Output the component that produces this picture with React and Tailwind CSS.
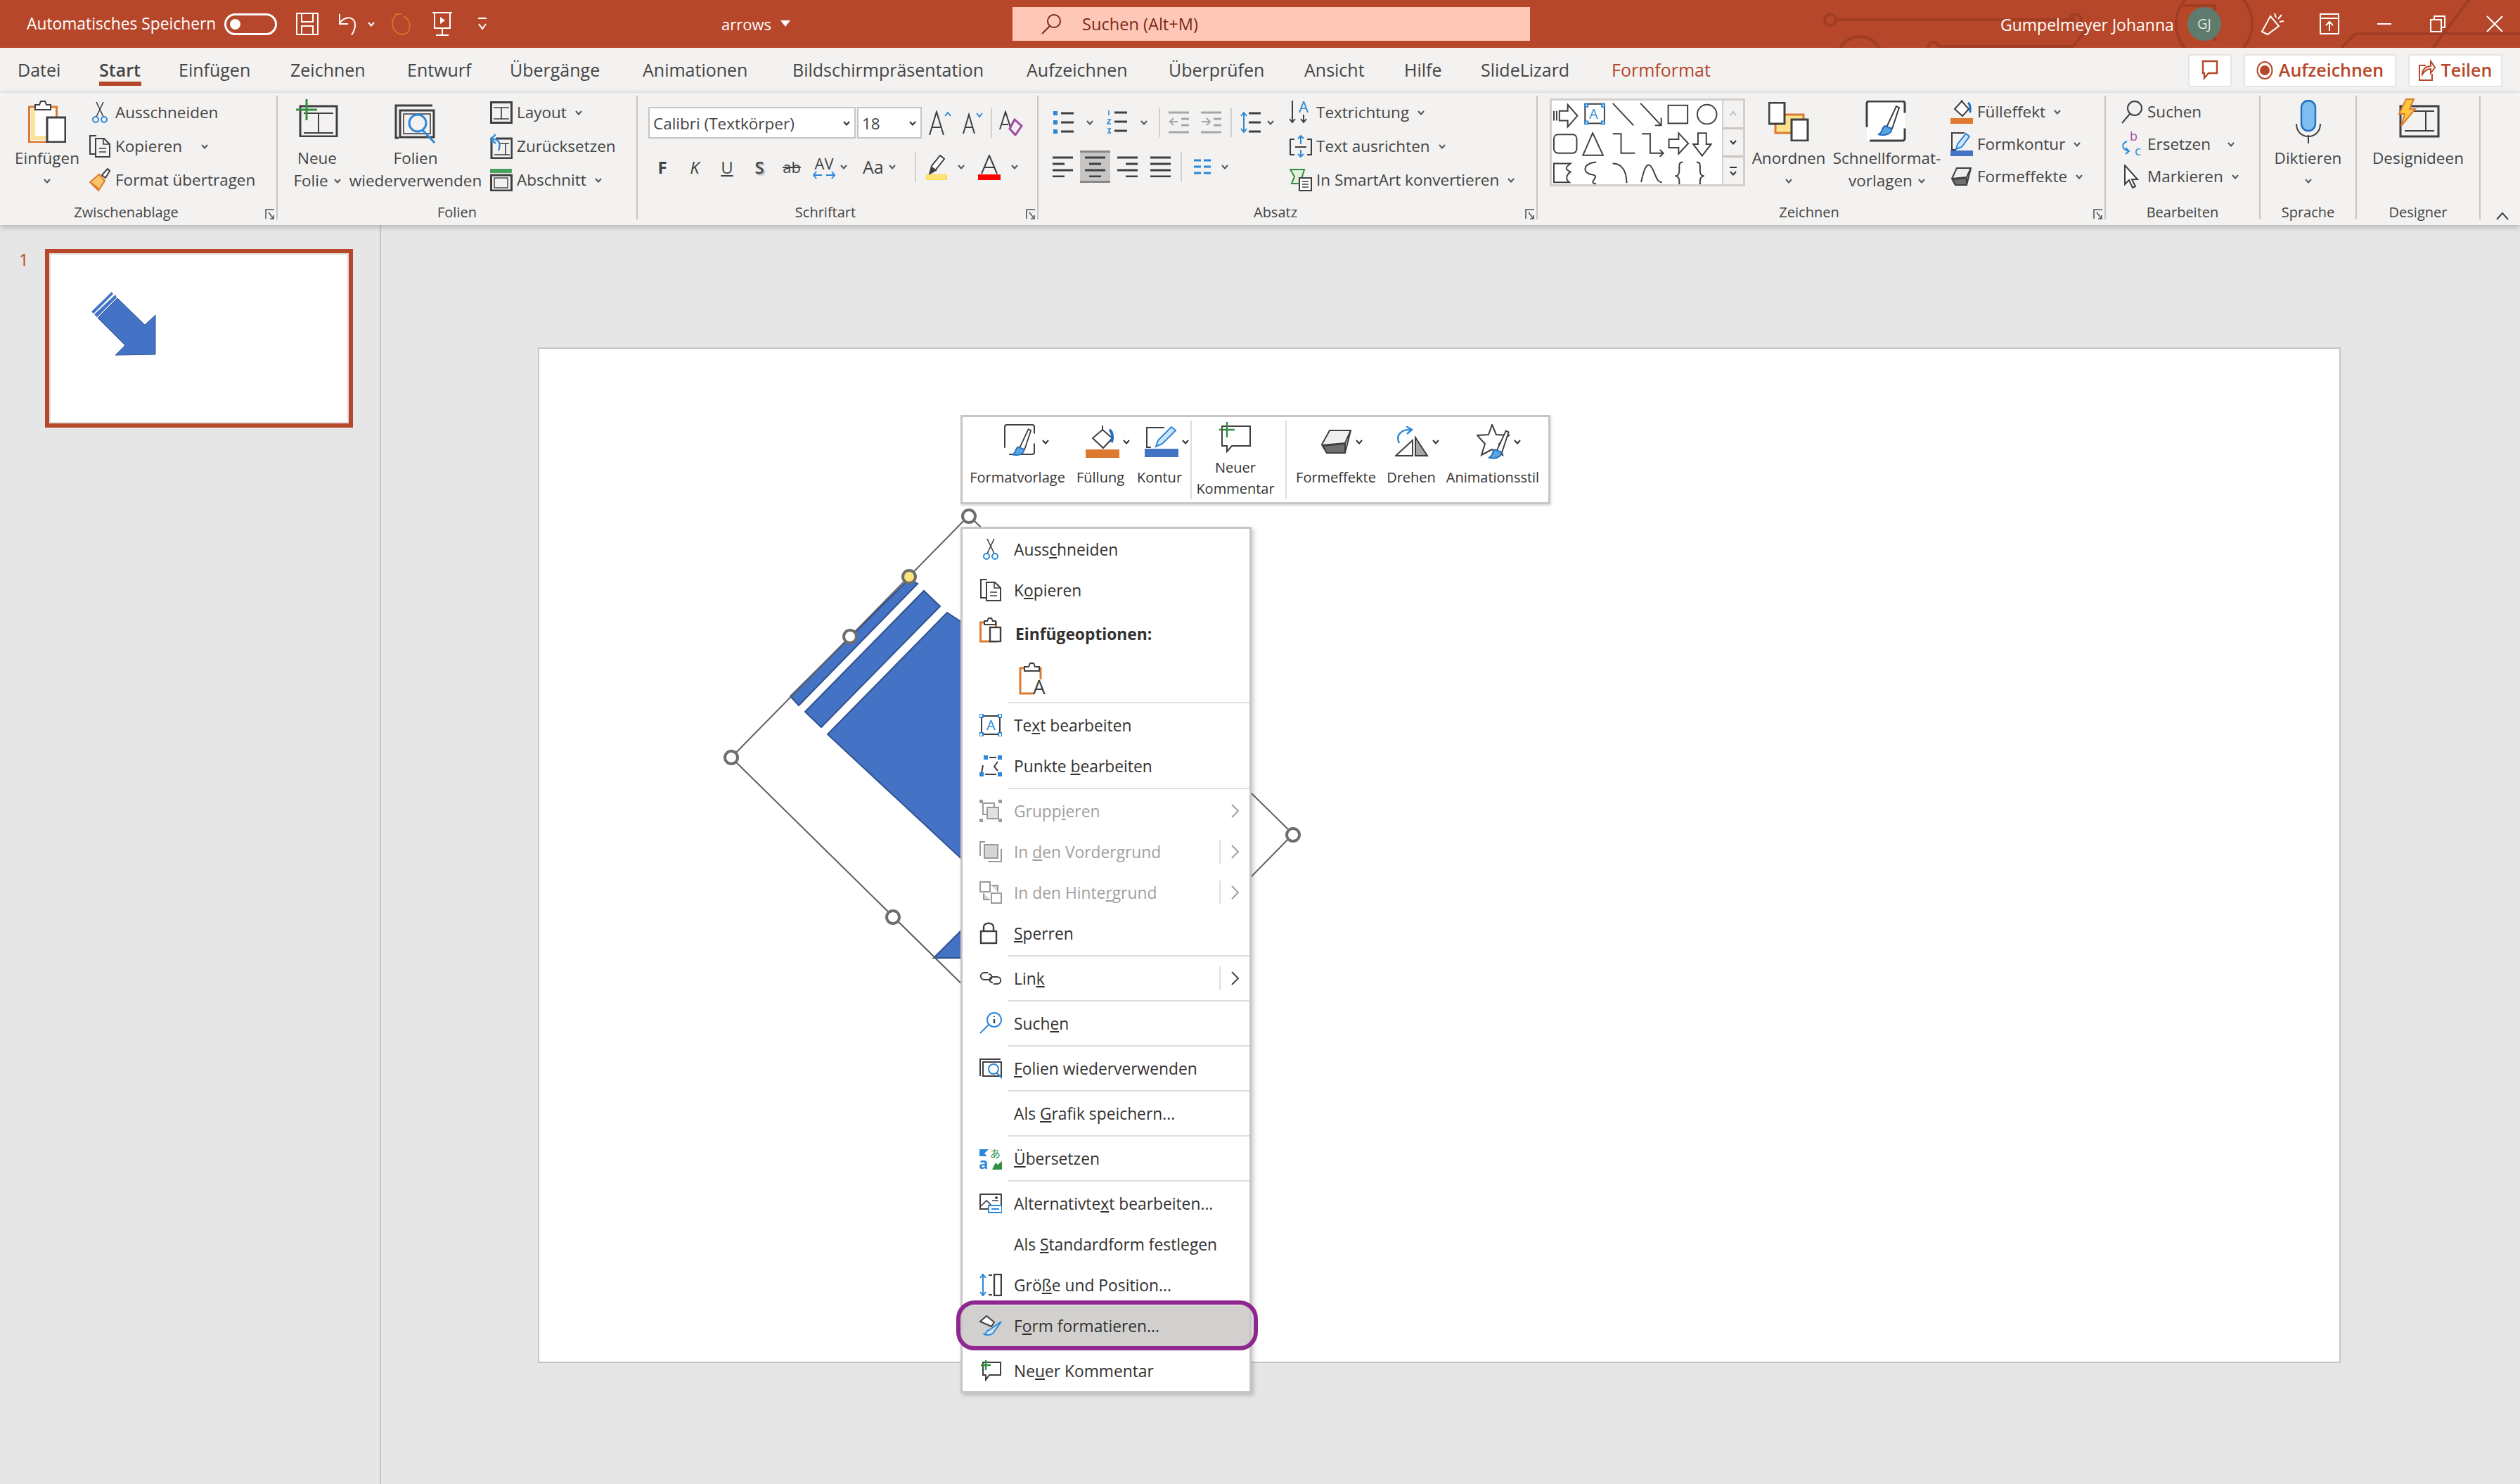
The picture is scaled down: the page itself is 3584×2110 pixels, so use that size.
import React from 'react';

const DK = '#3f3f41';
const BL = '#2b88d8';
const OR = '#dd7a30';
const GR = '#2f8f3f';
const GY = '#a6a6a6';

const Svg = ({ w, h, children, className = '', stroke = DK, sw = 2 }) => (
    <svg width={w} height={h} viewBox={`0 0 ${w} ${h}`} fill="none" stroke={stroke} strokeWidth={sw} className={`shrink-0 ${className}`}>
        {children}
    </svg>
);

const Chev = ({ className = '', color = '#555' }) => (
    <svg width="10" height="7" viewBox="0 0 10 7" fill="none" stroke={color} strokeWidth="2" className={`shrink-0 ${className}`}>
        <path d="M1 1l4 4.5L9 1" />
    </svg>
);

// --- shared icons ---
const Scissors = () => (
    <Svg w={32} h={32}>
        <path d="M11 1l10 21M21 1L11 22" strokeWidth="1.6" />
        <circle cx="10" cy="26" r="4" stroke={BL} />
        <circle cx="22" cy="26" r="4" stroke={BL} />
    </Svg>
);
const CopyIcon = () => (
    <Svg w={32} h={32}>
        <path d="M11 1H2v26h8" />
        <path d="M10 5h12l8 8v18H10z" />
        <path d="M21 5v8h9M15 19h10M15 24h10" strokeWidth="1.6" />
    </Svg>
);
const Painter = () => (
    <Svg w={32} h={34}>
        <path d="M2 20l13-11 8 9-9 14z" fill="#f6c56b" stroke={OR} />
        <path d="M4 21l10 8" stroke={OR} />
        <path d="M19 10l8-9 3 3-6 10z" fill="#fff" />
    </Svg>
);
const LayoutIcon = () => (
    <Svg w={32} h={32} sw={3}>
        <rect x="1.5" y="1.5" width="29" height="29" />
        <path d="M5 9h22M16 9v17M5 25h22" strokeWidth="1.6" />
    </Svg>
);
const ResetIcon = () => (
    <Svg w={32} h={36}>
        <rect x="2" y="7" width="29" height="28" strokeWidth="3" />
        <path d="M12 14h15M22 14v17M6 30h22" strokeWidth="1.6" />
        <path d="M8 1L1 8l7 6M2 8c10-1 14 5 10 16" stroke={BL} strokeWidth="2.4" fill="#f3f2f1" />
    </Svg>
);
const SectionIcon = () => (
    <Svg w={32} h={32}>
        <rect x="1" y="0" width="29" height="5" fill="#4aa564" stroke={GR} strokeWidth="1.5" />
        <rect x="1.5" y="9" width="29" height="22" strokeWidth="3" />
        <rect x="6" y="13" width="19" height="14" strokeWidth="1.4" />
    </Svg>
);
const BulletList = () => (
    <Svg w={32} h={32} sw={3}>
        <path d="M12 3h18M12 16h18M12 29h18" />
        <path d="M1 0h6v6H1zM1 13h6v6H1zM1 26h6v6H1z" fill={BL} stroke="none" />
    </Svg>
);
const NumberList = () => (
    <Svg w={32} h={34} sw={3}>
        <path d="M11 3h18M11 16h18M11 29h18" />
        <path d="M3 0v7M1 13h4l-4 6h5M1 26h4l-2 3 2 3H1" stroke={BL} strokeWidth="1.6" />
    </Svg>
);
const Indent = ({ flip }) => (
    <Svg w={30} h={32} sw={3} stroke={GY}>
        <path d="M0 2h29M18 11h11M18 20h11M0 30h29" />
        <path d={flip ? 'M1 15h11M8 10l5 5-5 5' : 'M13 15H2M7 10l-5 5 5 5'} strokeWidth="2" />
    </Svg>
);
const LineSpacing = () => (
    <Svg w={30} h={32} sw={3}>
        <path d="M12 3h17M12 16h17M12 29h17" />
        <path d="M5 30V2M1 7l4-5 4 5M1 25l4 5 4-5" stroke={BL} strokeWidth="2" />
    </Svg>
);
const Align = ({ mode }) => (
    <Svg w={30} h={30} sw={3}>
        {mode === 'l' && <path d="M0 2h29M0 11h17M0 20h29M0 29h17" />}
        {mode === 'c' && <path d="M0 2h29M6 11h17M0 20h29M6 29h17" />}
        {mode === 'r' && <path d="M0 2h29M12 11h17M0 20h29M12 29h17" />}
        {mode === 'j' && <path d="M0 2h29M0 11h29M0 20h29M0 29h29" />}
    </Svg>
);
const ColumnsIcon = () => (
    <Svg w={26} h={24} sw={3} stroke={BL}>
        <path d="M1 3h10M15 3h10M1 12h10M15 12h10M1 21h10M15 21h10" />
    </Svg>
);
const FillBucket = () => (
    <Svg w={30} h={26}>
        <path d="M15 2l10 11-9 10-11-10z" fill="#fff" />
        <path d="M15 2V0" />
        <path d="M24 4c4 3 3 8 3 14" stroke="#1f6fc0" strokeWidth="3" />
    </Svg>
);
const Effects = () => (
    <Svg w={32} h={32}>
        <path d="M2 19L9 4h20l-6 24H7z" fill="#eee" />
        <path d="M2 19l21-2 6-13M23 17v11" />
        <path d="M3 20l20-2v10H7z" fill="#6f6f6f" />
    </Svg>
);
const Search = () => (
    <Svg w={32} h={34}>
        <circle cx="20" cy="12" r="10" />
        <path d="M13 20L2 33" />
    </Svg>
);
const Replace = () => (
    <Svg w={32} h={36}>
        <text x="13" y="13" fontSize="18" fill="#a64ca6" stroke="none" fontFamily="Open Sans">b</text>
        <text x="20" y="34" fontSize="18" fill={BL} stroke="none" fontFamily="Open Sans">c</text>
        <path d="M9 14c-8 3-8 11 2 14M7 23l5 5-5 4" stroke={BL} />
    </Svg>
);
const Cursor = () => (
    <Svg w={32} h={34}>
        <path d="M6 1v27l6-6 5 11 4-2-5-10h8z" fill="#fff" />
    </Svg>
);
const ShapeBrush = () => (
    <g>
        <path d="M30 38L44 8l4 2-10 30z" fill="#fff" stroke={DK} strokeWidth="2" />
        <path d="M28 36c-6 3-3 11-10 12 10 3 20-1 19-8z" fill="#5aa4e0" stroke="#1f6fc0" strokeWidth="2" />
    </g>
);

// --- ribbon bits ---
const Group = ({ width, label, launcher, children }) => (
    <div className={`relative flex flex-col h-[176px] shrink-0 border-r-2 border-[#c8c6c4] ${width}`}>
        <div className="flex h-[158px]">{children}</div>
        <div className={`h-[20px] leading-[20px] text-center text-[20px] text-[#444] whitespace-nowrap ${launcher ? 'pr-[34px]' : ''}`}>{label}</div>
        {launcher && (
            <svg width="14" height="16" viewBox="0 0 14 16" fill="none" stroke="#555" strokeWidth="1.6" className="absolute right-[2px] bottom-[-1px]">
                <path d="M1 14V1h12M5 5l7 9M12 9v5H7" />
            </svg>
        )}
    </div>
);

const BigBtn = ({ icon, lines, chev, className = '', inlineChev }) => (
    <div className={`flex flex-col items-center shrink-0 ${className}`}>
        <div className="h-[73px] flex items-center justify-center">{icon}</div>
        {lines.map((l, i) => (
            <div key={i} className="h-[32px] leading-[32px] whitespace-nowrap flex items-center gap-[8px]">
                {l}
                {inlineChev && i === lines.length - 1 && <Chev />}
            </div>
        ))}
        {chev && <div className="h-[32px] flex items-center"><Chev /></div>}
    </div>
);

const SmallBtn = ({ icon, label, chev, chevGap = 'ml-[6px]', h = 'h-12' }) => (
    <div className={`flex items-center gap-[6px] whitespace-nowrap ${h}`}>
        <div className="w-[32px] flex justify-center">{icon}</div>
        <span>{label}</span>
        {chev && <Chev className={chevGap} />}
    </div>
);

const VSep = ({ className = '' }) => <div className={`w-[2px] h-[42px] bg-[#d2d0ce] shrink-0 ${className}`} />;

const tabs = [
    ['Datei', 'w-[116px]'],
    ['Start', 'w-[113px]'],
    ['Einfügen', 'w-[159px]'],
    ['Zeichnen', 'w-[166px]'],
    ['Entwurf', 'w-[146px]'],
    ['Übergänge', 'w-[189px]'],
    ['Animationen', 'w-[213px]'],
    ['Bildschirmpräsentation', 'w-[333px]'],
    ['Aufzeichnen', 'w-[202px]'],
    ['Überprüfen', 'w-[193px]'],
    ['Ansicht', 'w-[142px]'],
    ['Hilfe', 'w-[109px]'],
    ['SlideLizard', 'w-[186px]'],
    ['Formformat', 'w-[140px]'],
];

const TitleBar = () => (
    <header className="relative flex items-center h-[68px] shrink-0 bg-[#b7472a] text-white overflow-hidden">
        {/* circuit pattern of the red theme */}
        <svg width="1024" height="68" viewBox="0 0 1024 68" fill="none" stroke="#a13d23" strokeWidth="4" className="absolute right-0 top-0">
            <circle cx="43" cy="28" r="8" />
            <path d="M51 28h340" />
            <circle cx="392" cy="28" r="8" />
            <circle cx="85" cy="84" r="32" />
            <circle cx="190" cy="68" r="8" />
            <path d="M198 66h190l25-30" />
            <circle cx="589" cy="34" r="54" />
            <path d="M540 8h50v50" />
            <path d="M770 68l20-20h234M900 68l60-80" />
        </svg>
        <span className="relative ml-[38px] w-[281px] text-[22.8px] whitespace-nowrap">Automatisches Speichern</span>
        <div className="relative flex items-center w-[75px] h-[31px] border-[3px] border-white rounded-full pl-[5px]">
            <div className="w-[15px] h-[15px] rounded-full bg-white" />
        </div>
        <svg width="32" height="32" viewBox="0 0 32 32" fill="none" stroke="#fff" strokeWidth="2" className="relative ml-[27px]">
            <path d="M1 1h30v30H1zM8 1v12h16V1M8 31V19h16v12" />
        </svg>
        <svg width="30" height="32" viewBox="0 0 30 32" fill="none" stroke="#fff" strokeWidth="2" className="relative ml-[28px]">
            <path d="M2 2v14h12M2 15C12 0 34 8 19 32" />
        </svg>
        <Chev color="#fff" className="relative ml-[12px]" />
        <svg width="32" height="32" viewBox="0 0 32 32" fill="none" stroke="#d96f2d" strokeWidth="2" className="relative ml-[23px]">
            <path d="M6 2h9M7 3C-5 18 8 32 17 31c13-2 13-20 1-26" />
        </svg>
        <svg width="30" height="34" viewBox="0 0 30 34" fill="none" stroke="#fff" strokeWidth="2" className="relative ml-[26px]">
            <path d="M1 1h28M4 1v22h22V1M15 23v10M6 33h18" />
            <path d="M12 7l7 5-7 5z" fill="#fff" stroke="none" />
        </svg>
        <svg width="14" height="20" viewBox="0 0 14 20" fill="none" stroke="#fff" strokeWidth="2" className="relative ml-[35px]">
            <path d="M1 2h12M2 10l5 7 5-7" />
        </svg>
        <span className="relative ml-[333px] w-[84px] text-[22px]">arrows</span>
        <svg width="14" height="10" viewBox="0 0 14 10" className="relative">
            <path d="M0 0h14L7 9z" fill="#fff" />
        </svg>
        <div className="relative ml-[316px] flex items-center w-[736px] h-[48px] bg-[#fec7b8] text-[#7b2a14]">
            <svg width="30" height="30" viewBox="0 0 30 30" fill="none" stroke="#7b2a14" strokeWidth="2" className="ml-[40px]">
                <circle cx="19" cy="11" r="9" />
                <path d="M13 18L2 29" />
            </svg>
            <span className="ml-[29px] text-[23.6px] pt-[2px]">Suchen (Alt+M)</span>
        </div>
        <span className="relative ml-[669px] w-[266px] text-[23px] pt-[2px] whitespace-nowrap">Gumpelmeyer Johanna</span>
        <div className="relative w-[48px] h-[48px] rounded-full bg-[#5f7b6d] flex items-center justify-center text-[20px] text-[#dfe5e1]">GJ</div>
        <svg width="34" height="34" viewBox="0 0 34 34" fill="none" stroke="#fff" strokeWidth="2" className="relative ml-[56px]">
            <path d="M2 28L14 6l12 14-16 12zM20 2l2 6M30 4l-5 6M33 13l-6 1" />
        </svg>
        <svg width="28" height="30" viewBox="0 0 28 30" fill="none" stroke="#fff" strokeWidth="2" className="relative ml-[50px]">
            <path d="M1 1h26v28H1zM1 7h26M14 25V12M9 17l5-5 5 5" />
        </svg>
        <div className="relative ml-[54px] w-[20px] h-[2px] bg-white" />
        <svg width="22" height="24" viewBox="0 0 22 24" fill="none" stroke="#fff" strokeWidth="2" className="relative ml-[55px]">
            <path d="M1 6h15v17H1zM6 5V1h15v16h-4" />
        </svg>
        <svg width="24" height="24" viewBox="0 0 24 24" fill="none" stroke="#fff" strokeWidth="2" className="relative ml-[58px]">
            <path d="M1 1l22 22M23 1L1 23" />
        </svg>
    </header>
);

const TabRow = () => (
    <nav className="flex items-center h-[64px] shrink-0 pl-[25px] text-[25px] text-[#444]">
        {tabs.map(([name, w]) => (
            <div key={name} className={`relative shrink-0 whitespace-nowrap ${w} ${name === 'Formformat' ? 'text-[#b7472a]' : ''} ${name === 'Start' ? 'font-semibold' : ''}`}>
                {name}
                {name === 'Start' && <div className="absolute left-0 top-[35px] w-[60px] h-[6px] bg-[#b7472a]" />}
            </div>
        ))}
        <div className="ml-auto flex items-center gap-[17px] mr-[25px] text-[#b7472a] font-semibold">
            <div className="flex items-center justify-center w-[62px] h-[47px] bg-white rounded-[3px] border-2 border-[#e6e4e2]">
                <svg width="24" height="30" viewBox="0 0 24 30" fill="none" stroke="#b7472a" strokeWidth="2.4">
                    <path d="M2 2h20v17H10l-6 7v-7H2z" />
                </svg>
            </div>
            <div className="flex items-center justify-center gap-[8px] w-[217px] h-[47px] bg-white rounded-[3px] border-2 border-[#e6e4e2]">
                <svg width="24" height="26" viewBox="0 0 24 26" fill="none" stroke="#b7472a" strokeWidth="2">
                    <ellipse cx="12" cy="13" rx="10.5" ry="12" />
                    <circle cx="12" cy="13" r="6" fill="#b7472a" />
                </svg>
                Aufzeichnen
            </div>
            <div className="flex items-center justify-center gap-[8px] w-[134px] h-[47px] bg-white rounded-[3px] border-2 border-[#e6e4e2]">
                <svg width="24" height="30" viewBox="0 0 24 30" fill="none" stroke="#b7472a" strokeWidth="2">
                    <path d="M10 8H1v21h18v-9M5 21c0-8 6-12 12-12V2l6 9-6 8v-6c-5 0-9 3-12 8z" />
                </svg>
                Teilen
            </div>
        </div>
    </nav>
);

const FontGroup = () => (
    <div className="flex flex-col pt-[16px] pl-[15px]">
        <div className="flex items-center h-[45px]">
            <div className="flex items-center w-[295px] h-[45px] pl-[5px] pt-[2px] bg-white border-2 border-[#c8c6c4]">
                Calibri (Textkörper)
                <Chev className="ml-auto mr-[6px]" color="#333" />
            </div>
            <div className="flex items-center w-[92px] h-[45px] ml-[2px] pl-[5px] pt-[2px] bg-white border-2 border-[#c8c6c4]">
                18
                <Chev className="ml-auto mr-[6px]" color="#333" />
            </div>
            <Svg w={32} h={36} className="ml-[10px]">
                <path d="M1 35L11 2l10 33M5 24h12" />
                <path d="M23 8l4-5 4 5" stroke={BL} />
            </Svg>
            <Svg w={32} h={32} className="ml-[16px]">
                <path d="M1 31L9 4l8 27M4 22h11" />
                <path d="M20 2l4 5 4-5" stroke={BL} />
            </Svg>
            <VSep className="ml-[8px]" />
            <Svg w={34} h={36} className="ml-[10px]">
                <path d="M1 27L9 2l7 22M3 20h10" />
                <path d="M22 13l10 9-9 13-8-9z" stroke="#a04aa3" strokeWidth="3" />
            </Svg>
        </div>
        <div className="flex items-center h-[45px] mt-[18px] -ml-[3px]">
            <div className="w-[46px] text-center font-bold text-[24px]">F</div>
            <div className="w-[46px] text-center italic text-[24px]">K</div>
            <div className="w-[46px] text-center underline text-[24px]">U</div>
            <div className="w-[46px] text-center font-semibold text-[24px] [text-shadow:2px_2px_2px_#aaa]">S</div>
            <div className="w-[46px] text-center line-through text-[22px]">ab</div>
            <div className="w-[46px] flex flex-col items-center text-[22px] leading-[22px]">
                AV
                <svg width="32" height="12" viewBox="0 0 32 12" fill="none" stroke={BL} strokeWidth="2">
                    <path d="M1 6h12M5 1L1 6l4 5M19 6h12M27 1l4 5-4 5" />
                </svg>
            </div>
            <Chev />
            <div className="ml-[22px] text-[25px]">Aa</div>
            <Chev className="ml-[7px]" />
            <VSep className="ml-[27px]" />
            <div className="ml-[14px] flex flex-col items-center w-[30px]">
                <Svg w={26} h={28}>
                    <path d="M4 26l2-10L18 1l6 5L12 21z" fill="#fff" />
                    <path d="M3 27l3-9 6 4z" fill={DK} />
                </Svg>
                <div className="w-[30px] h-[8px] bg-[#ffe577] border border-[#f4d64f]" />
            </div>
            <Chev className="ml-[15px]" />
            <div className="ml-[19px] flex flex-col items-center w-[32px]">
                <Svg w={26} h={28}>
                    <path d="M2 27L13 1l11 26M6 18h14" />
                </Svg>
                <div className="w-[32px] h-[8px] bg-[#ff0000]" />
            </div>
            <Chev className="ml-[15px]" />
        </div>
    </div>
);

const ParagraphGroup = () => (
    <div className="flex w-full">
        <div className="flex flex-col w-[357px] pt-[22px] pl-[20px]">
            <div className="flex items-center h-[32px]">
                <BulletList />
                <Chev className="ml-[16px]" />
                <div className="ml-[19px]"><NumberList /></div>
                <Chev className="ml-[16px]" />
                <VSep className="ml-[16px]" />
                <div className="ml-[12px]"><Indent /></div>
                <div className="ml-[16px]"><Indent flip /></div>
                <VSep className="ml-[12px]" />
                <div className="ml-[12px]"><LineSpacing /></div>
                <Chev className="ml-[8px]" />
            </div>
            <div className="flex items-center h-[46px] mt-[24px]">
                <Align mode="l" />
                <div className="flex items-center justify-center w-[43px] h-[46px] ml-[9px] bg-[#c8c6c4] border-b-[3px] border-t-[3px] border-[#8a8886]">
                    <Align mode="c" />
                </div>
                <div className="ml-[10px]"><Align mode="r" /></div>
                <div className="ml-[17px]"><Align mode="j" /></div>
                <VSep className="ml-[13px]" />
                <div className="ml-[16px]"><ColumnsIcon /></div>
                <Chev className="ml-[14px]" />
            </div>
        </div>
        <div className="flex flex-col">
            <SmallBtn
                label="Textrichtung"
                chev
                icon={
                    <Svg w={32} h={34}>
                        <text x="13" y="17" fontSize="22" fill={BL} stroke="none" fontFamily="Open Sans">A</text>
                        <path d="M4 0v30M0 26l4 5 4-5M20 20v10M16 26l4 5 4-5" />
                    </Svg>
                }
            />
            <SmallBtn
                label="Text ausrichten"
                chev
                icon={
                    <Svg w={32} h={32}>
                        <path d="M7 6H1v22h6M25 6h6v22h-6M8 17h16" />
                        <path d="M16 1v12M12 5l4-4 4 4M16 21v10M12 27l4 4 4-4" stroke={BL} />
                    </Svg>
                }
            />
            <SmallBtn
                label="In SmartArt konvertieren"
                chev
                icon={
                    <Svg w={32} h={32}>
                        <path d="M1 1h20l-6 20H3l4-10z" fill="#e2efd9" stroke={GR} />
                        <rect x="14" y="13" width="17" height="18" fill="#fff" />
                        <path d="M18 18h9M18 22h9M18 26h9" strokeWidth="1.6" />
                    </Svg>
                }
            />
        </div>
    </div>
);

const ShapeGallery = () => (
    <div className="flex mt-[4px] ml-[17px] w-[278px] h-[125px] border-[3px] border-[#d2d0ce] bg-white">
        <svg width="246" height="119" viewBox="0 0 246 119" fill="none" stroke={DK} strokeWidth="2">
            {/* row 1 */}
            <path d="M3 14v14M7 14v14M11 14h12V5l14 16-14 16v-9H11z" />
            <rect x="48" y="4" width="28" height="28" stroke={DK} />
            <path d="M48 4h4v4h-4zM72 4h4v4h-4zM48 29h4v4h-4zM72 29h4v4h-4z" stroke={BL} fill="#fff" />
            <text x="54" y="26" fontSize="20" fill={BL} stroke="none" fontFamily="Open Sans">A</text>
            <path d="M88 3l30 32M128 3l30 32M158 24v11h-9" />
            <rect x="168" y="6" width="28" height="26" />
            <ellipse cx="224" cy="19" rx="14" ry="14" />
            {/* row 2 */}
            <rect x="3" y="48" width="33" height="27" rx="6" />
            <path d="M59 46l15 32H45zM88 47h12v28h20M130 47h12v28h18M156 70l5 5-5 5M169 55h14v-9l14 15-14 15v-9h-14zM211 46h12v16h7l-13 17-13-17h7z" />
            {/* row 3 */}
            <path d="M3 117V90h24c-8 6-8 8 0 12-8 6-6 12-2 15zM64 88c-20 2-20 16-6 18s-8 12 6 13M88 90c14 0 20 12 20 28M129 117c6-30 12-30 18-16 4 10 6 16 12 16M189 88c-6 0-5 4-5 12 0 6-3 8-6 8 3 0 6 2 6 8s-1 10 5 10M209 88c6 0 5 4 5 12 0 6 3 8 6 8-3 0-6 2-6 8s1 10-5 10" />
        </svg>
        <div className="flex flex-col w-[30px] border-l-2 border-[#d2d0ce] bg-[#f3f2f1]">
            <div className="flex-1 flex items-center justify-center border-b-[3px] border-[#c8c6c4]">
                <svg width="10" height="7" viewBox="0 0 10 7" fill="none" stroke="#bbb" strokeWidth="2"><path d="M1 6l4-5 4 5" /></svg>
            </div>
            <div className="flex-1 flex items-center justify-center border-b-[3px] border-[#c8c6c4]"><Chev color="#333" /></div>
            <div className="flex-1 flex flex-col gap-[4px] items-center justify-center">
                <div className="w-[10px] h-[2px] bg-[#333]" />
                <Chev color="#333" />
            </div>
        </div>
    </div>
);

const Ribbon = () => (
    <div className="relative z-10 flex h-[188px] shrink-0 pt-[4px] bg-[#f3f2f1] text-[22.5px] text-[#444] shadow-[0_2px_8px_rgba(0,0,0,0.25)]">
        <Group width="w-[395px]" label="Zwischenablage" launcher>
            <BigBtn
                className="w-[118px] ml-[8px]"
                lines={['Einfügen']}
                chev
                icon={
                    <svg width="54" height="60" viewBox="0 0 54 60" fill="none">
                        <rect x="1.5" y="9" width="39" height="50" fill="#fff" stroke={OR} strokeWidth="3" />
                        <path d="M4 12v44h33v-6H10V12z" fill="#fbe29a" />
                        <path d="M10 13V6h6l2-5h6l2 5h6v7z" fill="#fff" stroke={DK} strokeWidth="2" />
                        <rect x="27" y="24" width="26" height="35" fill="#fff" stroke={DK} strokeWidth="3" />
                    </svg>
                }
            />
            <div className="flex flex-col">
                <SmallBtn icon={<Scissors />} label="Ausschneiden" />
                <SmallBtn icon={<CopyIcon />} label="Kopieren" chev chevGap="ml-[21px]" />
                <SmallBtn icon={<Painter />} label="Format übertragen" />
            </div>
        </Group>
        <Group width="w-[512px]" label="Folien">
            <BigBtn
                className="w-[72px] ml-[20px]"
                lines={['Neue', 'Folie']}
                inlineChev
                icon={
                    <Svg w={60} h={54} sw={3} className="mt-[-10px]">
                        <rect x="6" y="10" width="52" height="43" />
                        <path d="M11 20h42M32 20v28M11 48h42" strokeWidth="2" />
                        <path d="M15 0v30M0 15h30" stroke={GR} strokeWidth="3" />
                    </Svg>
                }
            />
            <BigBtn
                className="w-[188px] ml-[10px]"
                lines={['Folien', 'wiederverwenden']}
                icon={
                    <Svg w={60} h={56} sw={3} className="mt-[7px]">
                        <path d="M54 2H2v46h4" />
                        <rect x="8" y="9" width="48" height="38" />
                        <rect x="13" y="14" width="38" height="28" strokeWidth="1.6" />
                        <circle cx="33" cy="27" r="12" stroke={BL} fill="#f3f2f1" />
                        <path d="M40 37l17 18" stroke={BL} />
                    </Svg>
                }
            />
            <div className="flex flex-col ml-[12px]">
                <SmallBtn icon={<LayoutIcon />} label="Layout" chev />
                <SmallBtn icon={<ResetIcon />} label="Zurücksetzen" />
                <SmallBtn icon={<SectionIcon />} label="Abschnitt" chev />
            </div>
        </Group>
        <Group width="w-[570px]" label="Schriftart" launcher>
            <FontGroup />
        </Group>
        <Group width="w-[710px]" label="Absatz" launcher>
            <ParagraphGroup />
        </Group>
        <Group width="w-[808px]" label="Zeichnen" launcher>
            <ShapeGallery />
            <BigBtn
                className="w-[104px] ml-[10px]"
                lines={['Anordnen']}
                chev
                icon={
                    <svg width="58" height="56" viewBox="0 0 58 56" fill="none">
                        <rect x="10" y="20" width="40" height="24" fill="#fbd97a" />
                        <rect x="10" y="18" width="40" height="26" fill="#fce18e" stroke={OR} strokeWidth="3" />
                        <rect x="1" y="1" width="22" height="30" fill="#fff" stroke={DK} strokeWidth="3" />
                        <rect x="33" y="25" width="23" height="30" fill="#fff" stroke={DK} strokeWidth="3" />
                    </svg>
                }
            />
            <BigBtn
                className="w-[157px] ml-[9px]"
                lines={['Schnellformat-', 'vorlagen']}
                inlineChev
                icon={
                    <svg width="62" height="60" viewBox="0 0 62 60" fill="none">
                        <rect x="2" y="1" width="54" height="56" rx="3" fill="#fff" stroke={DK} strokeWidth="3" strokeDasharray="66 22" />
                        <ShapeBrush />
                    </svg>
                }
            />
            <div className="flex flex-col ml-[12px]">
                <SmallBtn
                    h="h-[46px]"
                    icon={
                        <div className="flex flex-col items-center w-[32px]">
                            <FillBucket />
                            <div className="w-[32px] h-[8px] bg-[#dd7a30]" />
                        </div>
                    }
                    label="Fülleffekt"
                    chev
                />
                <SmallBtn
                    h="h-[46px]"
                    icon={
                        <div className="flex flex-col items-center w-[32px]">
                            <Svg w={32} h={26} stroke={BL}>
                                <path d="M20 1H2v24h6" stroke={DK} />
                                <path d="M8 24l2-7L22 2l5 4-11 15z" fill="#cfe4f7" />
                            </Svg>
                            <div className="w-[32px] h-[8px] bg-[#4472c4]" />
                        </div>
                    }
                    label="Formkontur"
                    chev
                />
                <SmallBtn h="h-[46px]" icon={<Effects />} label="Formeffekte" chev />
            </div>
        </Group>
        <Group width="w-[220px]" label="Bearbeiten">
            <div className="flex flex-col ml-[21px]">
                <SmallBtn h="h-[46px]" icon={<Search />} label="Suchen" />
                <SmallBtn h="h-[46px]" icon={<Replace />} label="Ersetzen" chev chevGap="ml-[18px]" />
                <SmallBtn h="h-[46px]" icon={<Cursor />} label="Markieren" chev />
            </div>
        </Group>
        <Group width="w-[137px]" label="Sprache">
            <BigBtn
                className="w-full"
                lines={['Diktieren']}
                chev
                icon={
                    <svg width="38" height="62" viewBox="0 0 38 62" fill="none" stroke={DK} strokeWidth="2">
                        <rect x="9" y="1" width="20" height="43" rx="10" fill="#7fbcf0" stroke="#1f6fc0" strokeWidth="2.4" />
                        <path d="M2 34c0 24 34 24 34 0M19 50v12" />
                    </svg>
                }
            />
        </Group>
        <Group width="w-[176px]" label="Designer">
            <BigBtn
                className="w-full"
                lines={['Designideen']}
                icon={
                    <svg width="62" height="56" viewBox="0 0 62 56" fill="none" stroke={DK} strokeWidth="3" className="mt-[-10px]">
                        <rect x="6" y="11" width="54" height="43" />
                        <path d="M12 18h42M42 18v28M12 46h42" strokeWidth="2" />
                        <path d="M14 1h11l-6 14h8L7 39l5-17H4z" fill="#ffc83d" stroke={OR} strokeWidth="2" />
                    </svg>
                }
            />
        </Group>
        <div className="flex-1 relative">
            <svg width="18" height="12" viewBox="0 0 18 12" fill="none" stroke="#444" strokeWidth="2" className="absolute left-[22px] top-[165px]">
                <path d="M1 11l8-9 8 9" />
            </svg>
        </div>
    </div>
);

const Thumbnail = () => (
    <aside className="flex w-[542px] shrink-0 border-r-2 border-[#c8c6c4] pt-[34px] pl-[27px] bg-[#e6e6e6]">
        <span className="w-[37px] text-[#b7472a] text-[24px] leading-[30px]">1</span>
        <div className="w-[438px] h-[254px] border-[6px] border-[#b7472a]">
            <div className="w-full h-full border-2 border-[#e1dfdd] bg-white">
                <svg width="422" height="238" viewBox="72 362 422 238">
                    <path d="M130 443l29-28 2 3-28 28zM134 447l30-28 2 4-28 28z" fill="#4472c4" />
                    <path d="M167 424l39 38 15-14v56l-57 1 14-14-39-39z" fill="#4472c4" stroke="#2f528f" />
                </svg>
            </div>
        </div>
    </aside>
);

const Bar = ({ label, children, className = '', icon, iconClass = '' }) => (
    <div className={`flex flex-col items-center shrink-0 text-[20px] text-[#333] whitespace-nowrap ${className}`}>
        <div className={`h-[60px] mt-[5px] flex items-center ${iconClass}`}>{icon}</div>
        {children || <div className="mt-[8px] leading-[26px]">{label}</div>}
    </div>
);

const miniChev = <Chev color="#333" className="ml-[5px]" />;

const MiniToolbar = () => (
    <div className="absolute left-[599px] top-[94px] flex w-[839px] h-[127px] bg-white border-[3px] border-[#c8c6c4] shadow-[1px_2px_3px_rgba(0,0,0,0.15)]">
        <Bar
            className="w-[156px]"
            label="Formatvorlage"
            iconClass="ml-[24px]"
            icon={
                <>
                    <svg width="50" height="50" viewBox="0 0 50 50" fill="none">
                        <rect x="2" y="1" width="42" height="42" rx="3" stroke={DK} strokeWidth="2" strokeDasharray="50 14" />
                        <g transform="translate(-4 0) scale(0.9)"><ShapeBrush /></g>
                    </svg>
                    {miniChev}
                </>
            }
        />
        <Bar
            className="w-[80px]"
            label="Füllung"
            iconClass="ml-[20px]"
            icon={
                <>
                    <div className="flex flex-col items-center w-[48px]">
                        <svg width="40" height="34" viewBox="0 0 40 34" fill="none" stroke={DK} strokeWidth="2">
                            <path d="M20 6L34 18 21 32 6 18z" fill="#fff" />
                            <path d="M20 6V0" />
                            <path d="M30 6c5 4 5 10 3 18" stroke="#1f6fc0" strokeWidth="4" />
                        </svg>
                        <div className="w-[48px] h-[12px] bg-[#dd7a30]" />
                    </div>
                    {miniChev}
                </>
            }
        />
        <Bar
            className="w-[88px]"
            label="Kontur"
            iconClass="ml-[20px]"
            icon={
                <>
                    <div className="flex flex-col items-center w-[48px]">
                        <Svg w={48} h={32} stroke={BL}>
                            <path d="M28 2H3v28h6" stroke={DK} />
                            <path d="M16 29l3-9L38 1l6 5-19 19z" fill="#cfe4f7" />
                        </Svg>
                        <div className="w-[48px] h-[12px] bg-[#4472c4]" />
                    </div>
                    {miniChev}
                </>
            }
        />
        <div className="w-[2px] h-[112px] my-[5px] bg-[#e1dfdd]" />
        <Bar
            className="w-[124px] mr-[9px]"
            iconClass="!mt-[6px] !h-[46px]"
            icon={
                <Svg w={46} h={44}>
                    <path d="M4 6h40v28H18l-7 8v-8H4z" fill="#fff" />
                    <path d="M11 0v22M0 11h22" stroke={GR} strokeWidth="2.4" />
                </Svg>
            }
        >
            <div className="leading-[30px] mt-[5px] text-center">Neuer<br />Kommentar</div>
        </Bar>
        <div className="w-[2px] h-[112px] my-[5px] bg-[#e1dfdd]" />
        <Bar
            className="w-[140px]"
            label="Formeffekte"
            iconClass="ml-[16px]"
            icon={
                <>
                    <svg width="44" height="36" viewBox="0 0 44 36" fill="none" stroke={DK} strokeWidth="2">
                        <path d="M1 22L12 2h30l-8 32H8z" fill="#eee" />
                        <path d="M1 23l33-3 8-18M34 20v14" />
                        <path d="M2 24l32-3v13H8z" fill="#6f6f6f" />
                    </svg>
                    {miniChev}
                </>
            }
        />
        <Bar
            className="w-[74px]"
            label="Drehen"
            iconClass="ml-[16px]"
            icon={
                <>
                    <svg width="48" height="44" viewBox="0 0 48 44" fill="none" stroke={DK} strokeWidth="2">
                        <path d="M1 42l24-22v22z" />
                        <path d="M29 16l17 26H29z" fill="#a6a6a6" />
                        <path d="M6 24C0 12 10 4 24 5M16 0l8 5-7 6" stroke={BL} strokeWidth="2.4" />
                    </svg>
                    {miniChev}
                </>
            }
        />
        <Bar
            className="w-[158px]"
            label="Animationsstil"
            iconClass="ml-[16px]"
            icon={
                <>
                    <svg width="48" height="50" viewBox="0 0 48 50" fill="none">
                        <path d="M22 1l6 14 18 1-14 12 5 16-15-8-15 8 5-16L1 16l16-1z" stroke={DK} strokeWidth="2" fill="#fff" />
                        <g transform="translate(0 2) scale(0.95)"><ShapeBrush /></g>
                    </svg>
                    {miniChev}
                </>
            }
        />
    </div>
);

const Sep = () => (
    <div className="flex items-center h-[6px] pl-[64px]">
        <div className="w-full h-[2px] bg-[#e1dfdd]" />
    </div>
);

const MItem = ({ icon, children, disabled, sub, noDivider, active, h = 'h-[58px]', bold }) => (
    <div className={`flex items-center ${h} ${disabled ? 'text-[#a19f9d]' : 'text-[#323130]'} ${active ? 'bg-[#d2d0ce]' : ''}`}>
        <div className="w-[32px] ml-[24px] flex justify-center shrink-0">{icon}</div>
        <div className={`ml-[17px] pt-[2px] whitespace-nowrap ${bold ? 'font-bold pl-[2px]' : ''}`}>{children}</div>
        {sub && (
            <div className="ml-auto flex items-center mr-[14px]">
                <div className={`w-[2px] h-[34px] ${noDivider ? '' : 'bg-[#e1dfdd]'}`} />
                <svg width="12" height="20" viewBox="0 0 12 20" fill="none" stroke={disabled ? '#a19f9d' : '#444'} strokeWidth="2" className="ml-[15px]">
                    <path d="M1 1l9 9-9 9" />
                </svg>
            </div>
        )}
    </div>
);

const ContextMenu = () => (
    <div className="absolute left-[599px] top-[253px] w-[414px] bg-white border-[3px] border-[#c8c6c4] text-[22.8px] shadow-[3px_3px_6px_rgba(0,0,0,0.2)]">
        <MItem icon={<Scissors />}>Auss<u>c</u>hneiden</MItem>
        <MItem icon={<CopyIcon />}>K<u>o</u>pieren</MItem>
        <MItem
            h="h-[66px]"
            bold
            icon={
                <svg width="32" height="36" viewBox="0 0 32 36" fill="none" className="mt-[-10px]">
                    <path d="M1.5 7h22v27h-22z" stroke={OR} strokeWidth="3" />
                    <path d="M7 10V5h4l2-4h4l2 4h4v5z" fill="#fff" stroke={DK} strokeWidth="2" />
                    <rect x="15" y="14" width="15" height="20" fill="#fff" stroke={DK} strokeWidth="2.4" />
                </svg>
            }
        >
            Einfügeoptionen:
        </MItem>
        <div className="flex items-center h-[62px] pl-[80px]">
            <svg width="42" height="46" viewBox="0 0 42 46" fill="none">
                <path d="M2 8h29v36H2z" stroke={OR} strokeWidth="3" fill="#fff" />
                <path d="M8 12V6h6l2-5h5l2 5h6v6z" fill="#fff" stroke={DK} strokeWidth="2" />
                <rect x="21" y="24" width="20" height="22" fill="#fff" />
                <text x="20" y="45" fontSize="28" fill={DK} fontFamily="Open Sans">A</text>
            </svg>
        </div>
        <Sep />
        <MItem
            icon={
                <Svg w={32} h={32}>
                    <rect x="3" y="3" width="26" height="26" />
                    <path d="M0 0h5v5H0zM27 0h5v5h-5zM0 27h5v5H0zM27 27h5v5h-5z" stroke={BL} fill="#fff" />
                    <text x="10" y="23" fontSize="20" fill={BL} stroke="none" fontFamily="Open Sans">A</text>
                </Svg>
            }
        >
            Te<u>x</u>t bearbeiten
        </MItem>
        <MItem
            icon={
                <Svg w={32} h={30}>
                    <path d="M14 3h10M5 14L3 25M26 9l-5 7 5 6M8 27h16" />
                    <path d="M6 0h6v6H6zM26 0h6v6h-6zM0 24h6v6H0zM26 24h6v6h-6z" fill={BL} stroke="none" />
                </Svg>
            }
        >
            Punkte <u>b</u>earbeiten
        </MItem>
        <Sep />
        <MItem
            disabled
            sub
            noDivider
            icon={
                <Svg w={32} h={32} stroke="#9a9a9a">
                    <path d="M0 0h4v4H0zM28 0h4v4h-4zM0 28h4v4H0zM28 28h4v4h-4z" fill="#9a9a9a" />
                    <rect x="5" y="5" width="16" height="16" />
                    <rect x="11" y="11" width="16" height="16" fill="#e1e1e1" />
                </Svg>
            }
        >
            Grupp<u>i</u>eren
        </MItem>
        <MItem
            disabled
            sub
            icon={
                <Svg w={32} h={32} stroke="#9a9a9a">
                    <path d="M8 2H1v20M12 30h19V12" />
                    <rect x="7" y="6" width="19" height="19" fill="#d5d5d5" />
                </Svg>
            }
        >
            In <u>d</u>en Vordergrund
        </MItem>
        <MItem
            disabled
            sub
            icon={
                <Svg w={32} h={32} stroke="#9a9a9a">
                    <rect x="1" y="1" width="14" height="14" />
                    <rect x="17" y="17" width="14" height="14" />
                    <path d="M17 6h9v9M6 17v9h9" fill="#d5d5d5" />
                </Svg>
            }
        >
            In den Hinte<u>r</u>grund
        </MItem>
        <MItem
            icon={
                <Svg w={32} h={32} sw={2.4}>
                    <rect x="2" y="13" width="22" height="17" />
                    <path d="M6 13V7c0-7 14-7 14 0v6" />
                </Svg>
            }
        >
            <u>S</u>perren
        </MItem>
        <Sep />
        <MItem
            sub
            icon={
                <Svg w={32} h={22}>
                    <path d="M12 3H7C0 3 0 13 7 13h6c6 0 6-8 0-8M20 19h5c7 0 7-10 0-10h-6c-6 0-6 8 0 8" />
                </Svg>
            }
        >
            Lin<u>k</u>
        </MItem>
        <Sep />
        <MItem
            icon={
                <Svg w={32} h={32} stroke={BL}>
                    <circle cx="21" cy="11" r="10" />
                    <path d="M13 18L1 30" />
                    <path d="M21 6v1M21 10v6" stroke={DK} strokeWidth="2.4" />
                </Svg>
            }
        >
            Such<u>e</u>n
        </MItem>
        <Sep />
        <MItem
            icon={
                <Svg w={32} h={30}>
                    <path d="M30 2H1v24" />
                    <rect x="5" y="6" width="26" height="20" />
                    <circle cx="20" cy="16" r="7" stroke={BL} fill="#fff" />
                    <path d="M24 21l8 8" stroke={BL} />
                </Svg>
            }
        >
            <u>F</u>olien wiederverwenden
        </MItem>
        <Sep />
        <MItem>Als <u>G</u>rafik speichern...</MItem>
        <Sep />
        <MItem
            icon={
                <svg width="32" height="32" viewBox="0 0 32 32">
                    <path d="M0 3h13L7 9l4 4H0z" fill={BL} />
                    <text x="-1" y="31" fontSize="22" fontWeight="700" fill={BL} fontFamily="Open Sans">a</text>
                    <text x="15" y="15" fontSize="15" fill={GR} fontFamily="Noto Sans CJK JP">あ</text>
                    <path d="M18 32h14V20l-6 5-3-3-2 4z" fill={GR} />
                </svg>
            }
        >
            <u>Ü</u>bersetzen
        </MItem>
        <Sep />
        <MItem
            icon={
                <Svg w={32} h={28}>
                    <path d="M12 22H1V1h30v16" />
                    <path d="M2 18l8-8 8 8M18 10h9" strokeWidth="1.6" />
                    <circle cx="24" cy="6" r="2" fill={DK} stroke="none" />
                    <rect x="13" y="17" width="19" height="10" stroke={BL} fill="#fff" />
                    <path d="M17 22h11" stroke={BL} />
                </Svg>
            }
        >
            Alternativte<u>x</u>t bearbeiten...
        </MItem>
        <MItem>Als <u>S</u>tandardform festlegen</MItem>
        <MItem
            icon={
                <Svg w={32} h={32}>
                    <path d="M5 1v30M1 6l4-5 4 5M1 26l4 5 4-5" stroke={BL} />
                    <path d="M13 2h5M13 30h5" />
                    <rect x="21" y="1" width="10" height="30" strokeWidth="2.4" />
                </Svg>
            }
        >
            Grö<u>ß</u>e und Position...
        </MItem>
        <MItem
            active
            icon={
                <Svg w={32} h={30}>
                    <path d="M1 9L10 1l11 9-4 6z" fill="#fff" />
                    <path d="M7 27c3-1 3-6 7-6l17-12-12 17c-3 2-8 3-12 1z" stroke={BL} fill="#cfe4f7" />
                </Svg>
            }
        >
            F<u>o</u>rm formatieren...
        </MItem>
        <div className="h-[6px]" />
        <MItem
            icon={
                <Svg w={30} h={30}>
                    <path d="M4 3h25v18H13l-5 7v-7H4z" />
                    <path d="M8 0v14M1 7h14" stroke={GR} strokeWidth="2.4" fill="none" />
                </Svg>
            }
        >
            Ne<u>u</u>er Kommentar
        </MItem>
        {/* purple callout added to the screenshot */}
        <div className="absolute left-[-9px] top-[1097px] w-[429px] h-[71px] rounded-[26px] border-[6px] border-[#8e278f]" />
    </div>
);

const Handle = ({ x, y, fill = '#fff' }) => <circle cx={x} cy={y} r="9" fill={fill} stroke="#6e6e6e" strokeWidth="4" />;

const SlideCanvas = () => (
    <svg width="2560" height="1440" viewBox="767 496 2560 1440" fill="none" className="absolute left-0 top-0">
        <g fill="#4472c4" stroke="#2f528f" strokeWidth="2">
            <path d="M1293 823l12 7-169 173-12-13z" />
            <path d="M1314 840l23 22-169 172-23-22z" />
            <path d="M1347 871l353 229v262H1328l92-92-243-226z" />
        </g>
        <path d="M1378 733L1040 1077 1501 1530 1839 1186z" stroke="#5f5f5f" strokeWidth="2" />
        <Handle x={1378} y={734} />
        <Handle x={1293} y={820} fill="#ffe27a" />
        <Handle x={1209} y={905} />
        <Handle x={1040} y={1077} />
        <Handle x={1270} y={1304} />
        <Handle x={1839} y={1187} />
    </svg>
);

export default function App() {
    return (
        <div className="flex flex-col w-screen h-screen overflow-hidden bg-[#e6e6e6] font-['Open_Sans',sans-serif]">
            <TitleBar />
            <div className="bg-[#f3f2f1]"><TabRow /></div>
            <Ribbon />
            <main className="flex flex-1">
                <Thumbnail />
                <section className="flex-1 pl-[225px] pt-[176px]">
                    <div className="relative w-[2560px] h-[1440px] bg-white outline-2 outline-[#c8c6c4]">
                        <SlideCanvas />
                        <MiniToolbar />
                        <ContextMenu />
                    </div>
                </section>
            </main>
        </div>
    );
}
